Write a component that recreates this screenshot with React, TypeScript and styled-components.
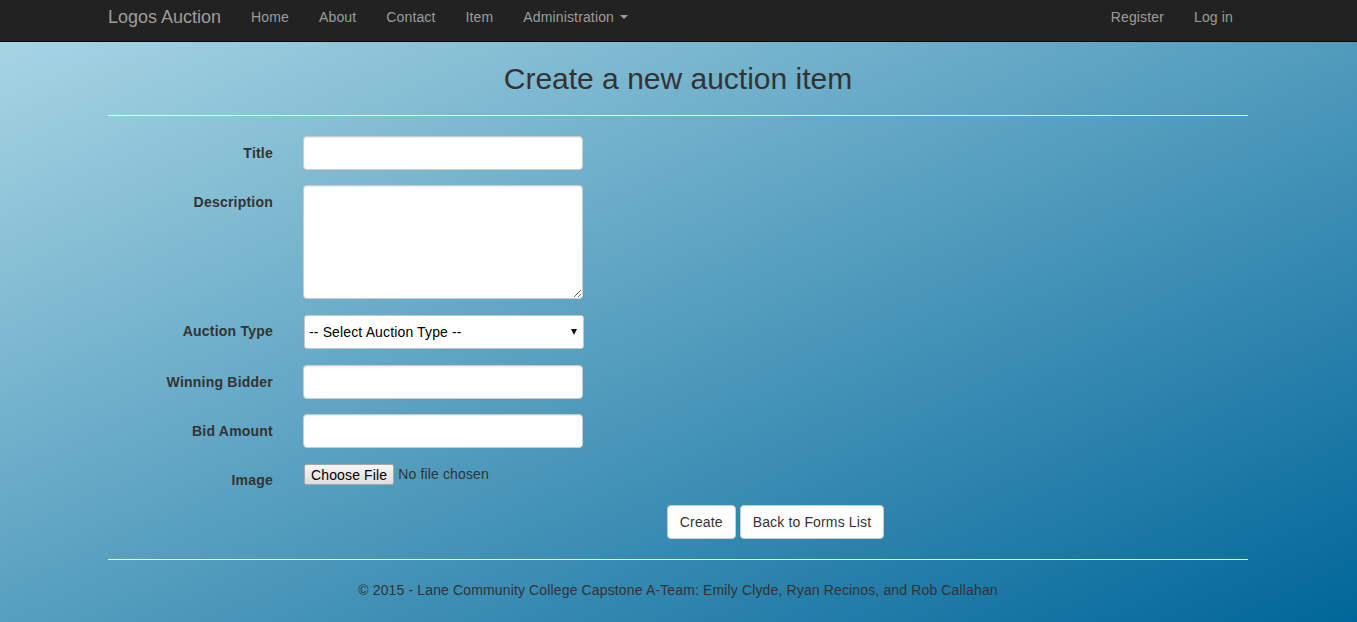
import React from "react";
import styled, { createGlobalStyle } from "styled-components";

const Global = createGlobalStyle`
  html, body { margin: 0; padding: 0; }
  body {
    font-family: "Liberation Sans", Arial, Helvetica, sans-serif;
    font-size: 14px;
    line-height: 1.42857;
    letter-spacing: 0.14px;
    color: #333;
  }
  * { box-sizing: border-box; }
`;

const Page = styled.div`
  min-height: 100vh;
  background: linear-gradient(to bottom right, #add8e6 0%, #006699 100%);
`;

const Navbar = styled.nav`
  height: 42px;
  background: #222;
  border-bottom: 1px solid #080808;
`;

const NavContainer = styled.div`
  width: 1170px;
  margin-left: calc(50% - 585.5px);
  padding: 0 15px;
  display: flex;
  align-items: flex-start;
`;

const Brand = styled.a`
  font-size: 18px;
  line-height: 20px;
  letter-spacing: 0;
  padding: 7px 15px 0 0;
  color: #9d9d9d;
  text-decoration: none;
`;

const NavList = styled.ul<{ $right?: boolean }>`
  list-style: none;
  margin: 0;
  padding: 0;
  display: flex;
  margin-left: ${(p) => (p.$right ? "auto" : "0")};
`;

const NavLink = styled.a`
  display: flex;
  align-items: center;
  padding: 7px 15px 0;
  line-height: 20px;
  color: #9d9d9d;
  text-decoration: none;
  font-size: 14px;
`;

const Caret = styled.span`
  display: inline-block;
  width: 0;
  height: 0;
  margin-left: 6px;
  border-top: 4px solid #9d9d9d;
  border-left: 4px solid transparent;
  border-right: 4px solid transparent;
`;

const Container = styled.div`
  width: 1170px;
  margin-left: calc(50% - 585.5px);
  padding: 0 15px;
`;

const Heading = styled.h2`
  margin: 20px 0 10px;
  font-size: 30px;
  font-weight: 500;
  line-height: 33px;
  letter-spacing: 0;
  text-align: center;
  color: #333;
`;

const Rule = styled.hr`
  margin: 20px 0;
  border: 0;
  border-top: 1px solid #eee;
`;

const Form = styled.form`
  margin: 0 -15px;
`;

const Group = styled.div`
  display: grid;
  grid-template-columns: 195px 975px;
  margin-bottom: 15px;
`;

const Label = styled.label`
  padding: 7px 15px 0;
  text-align: right;
  font-weight: bold;
  line-height: 20px;
  letter-spacing: 0.22px;
  color: #333;
`;

const Field = styled.div<{ $center?: boolean }>`
  padding: 0 15px;
  grid-column: 2;
  text-align: ${(p) => (p.$center ? "center" : "left")};
`;

const Input = styled.input`
  display: block;
  width: 280px;
  height: 34px;
  padding: 6px 12px;
  font: inherit;
  font-size: 14px;
  color: #555;
  background: #fff;
  border: 1px solid #ccc;
  border-radius: 4px;
  box-shadow: inset 0 1px 1px rgba(0, 0, 0, 0.075);
`;

const TextArea = styled.textarea`
  display: block;
  width: 280px;
  height: 114px;
  padding: 6px 12px;
  font: inherit;
  font-size: 14px;
  color: #555;
  background: #fff;
  border: 1px solid #ccc;
  border-radius: 4px;
  box-shadow: inset 0 1px 1px rgba(0, 0, 0, 0.075);
`;

const SelectWrap = styled.div`
  position: relative;
  width: 280px;
  margin: 1px 0 1px 1px;
`;

const Select = styled.select`
  display: block;
  width: 280px;
  height: 34px;
  padding: 0 20px 0 4px;
  appearance: none;
  -webkit-appearance: none;
  font-family: "Liberation Sans", Arial, sans-serif;
  font-size: 14px;
  letter-spacing: 0.14px;
  color: #000;
  background: #fff;
  border: 1px solid #c6c6c6;
  border-radius: 3px;
`;

const SelectArrow = styled.span`
  position: absolute;
  right: 7px;
  top: 14px;
  width: 0;
  height: 0;
  border-top: 6px solid #111;
  border-left: 3.5px solid transparent;
  border-right: 3.5px solid transparent;
  pointer-events: none;
`;

const FileRow = styled.div`
  display: flex;
  align-items: center;
  margin: 1px 0 0 1px;
  gap: 4px;
`;

const FileButton = styled.button`
  height: 21px;
  padding: 0 6px;
  font-family: "Liberation Sans", Arial, sans-serif;
  font-size: 14px;
  letter-spacing: 0.14px;
  color: #000;
  background: linear-gradient(#f6f6f6, #dedede);
  border: 1px solid #a6a6a6;
  border-radius: 2px;
`;

const FileText = styled.span`
  font-size: 14px;
  color: #333;
`;

const Button = styled.button`
  display: inline-block;
  padding: 6px 12px;
  font-family: "Liberation Sans", Arial, sans-serif;
  font-size: 14px;
  letter-spacing: 0.14px;
  line-height: 20px;
  color: #333;
  background: #fff;
  border: 1px solid #ccc;
  border-radius: 4px;
  margin: 0 2px;
`;

const Footer = styled.footer`
  text-align: center;
  p {
    margin: 0 0 10px;
    line-height: 20px;
  }
`;

export default function App() {
  return (
    <>
      <Global />
      <Page>
        <Navbar>
          <NavContainer>
            <Brand href="#">Logos Auction</Brand>
            <NavList>
              <li><NavLink href="#">Home</NavLink></li>
              <li><NavLink href="#">About</NavLink></li>
              <li><NavLink href="#">Contact</NavLink></li>
              <li><NavLink href="#">Item</NavLink></li>
              <li><NavLink href="#">Administration<Caret /></NavLink></li>
            </NavList>
            <NavList $right>
              <li><NavLink href="#">Register</NavLink></li>
              <li><NavLink href="#">Log in</NavLink></li>
            </NavList>
          </NavContainer>
        </Navbar>
        <Container>
          <Heading>Create a new auction item</Heading>
          <Rule />
          <Form onSubmit={(e) => e.preventDefault()}>
            <Group>
              <Label>Title</Label>
              <Field><Input type="text" /></Field>
            </Group>
            <Group>
              <Label>Description</Label>
              <Field><TextArea /></Field>
            </Group>
            <Group>
              <Label>Auction Type</Label>
              <Field>
                <SelectWrap>
                  <Select defaultValue="">
                    <option value="">-- Select Auction Type --</option>
                  </Select>
                  <SelectArrow />
                </SelectWrap>
              </Field>
            </Group>
            <Group>
              <Label>Winning Bidder</Label>
              <Field><Input type="text" /></Field>
            </Group>
            <Group>
              <Label>Bid Amount</Label>
              <Field><Input type="text" /></Field>
            </Group>
            <Group>
              <Label>Image</Label>
              <Field>
                <FileRow>
                  <FileButton type="button">Choose File</FileButton>
                  <FileText>No file chosen</FileText>
                </FileRow>
              </Field>
            </Group>
            <Group>
              <Field $center>
                <Button type="submit">Create</Button>
                <Button type="button">Back to Forms List</Button>
              </Field>
            </Group>
          </Form>
          <Rule />
          <Footer>
            <p>© 2015 - Lane Community College Capstone A-Team: Emily Clyde, Ryan Recinos, and Rob Callahan</p>
          </Footer>
        </Container>
      </Page>
    </>
  );
}
